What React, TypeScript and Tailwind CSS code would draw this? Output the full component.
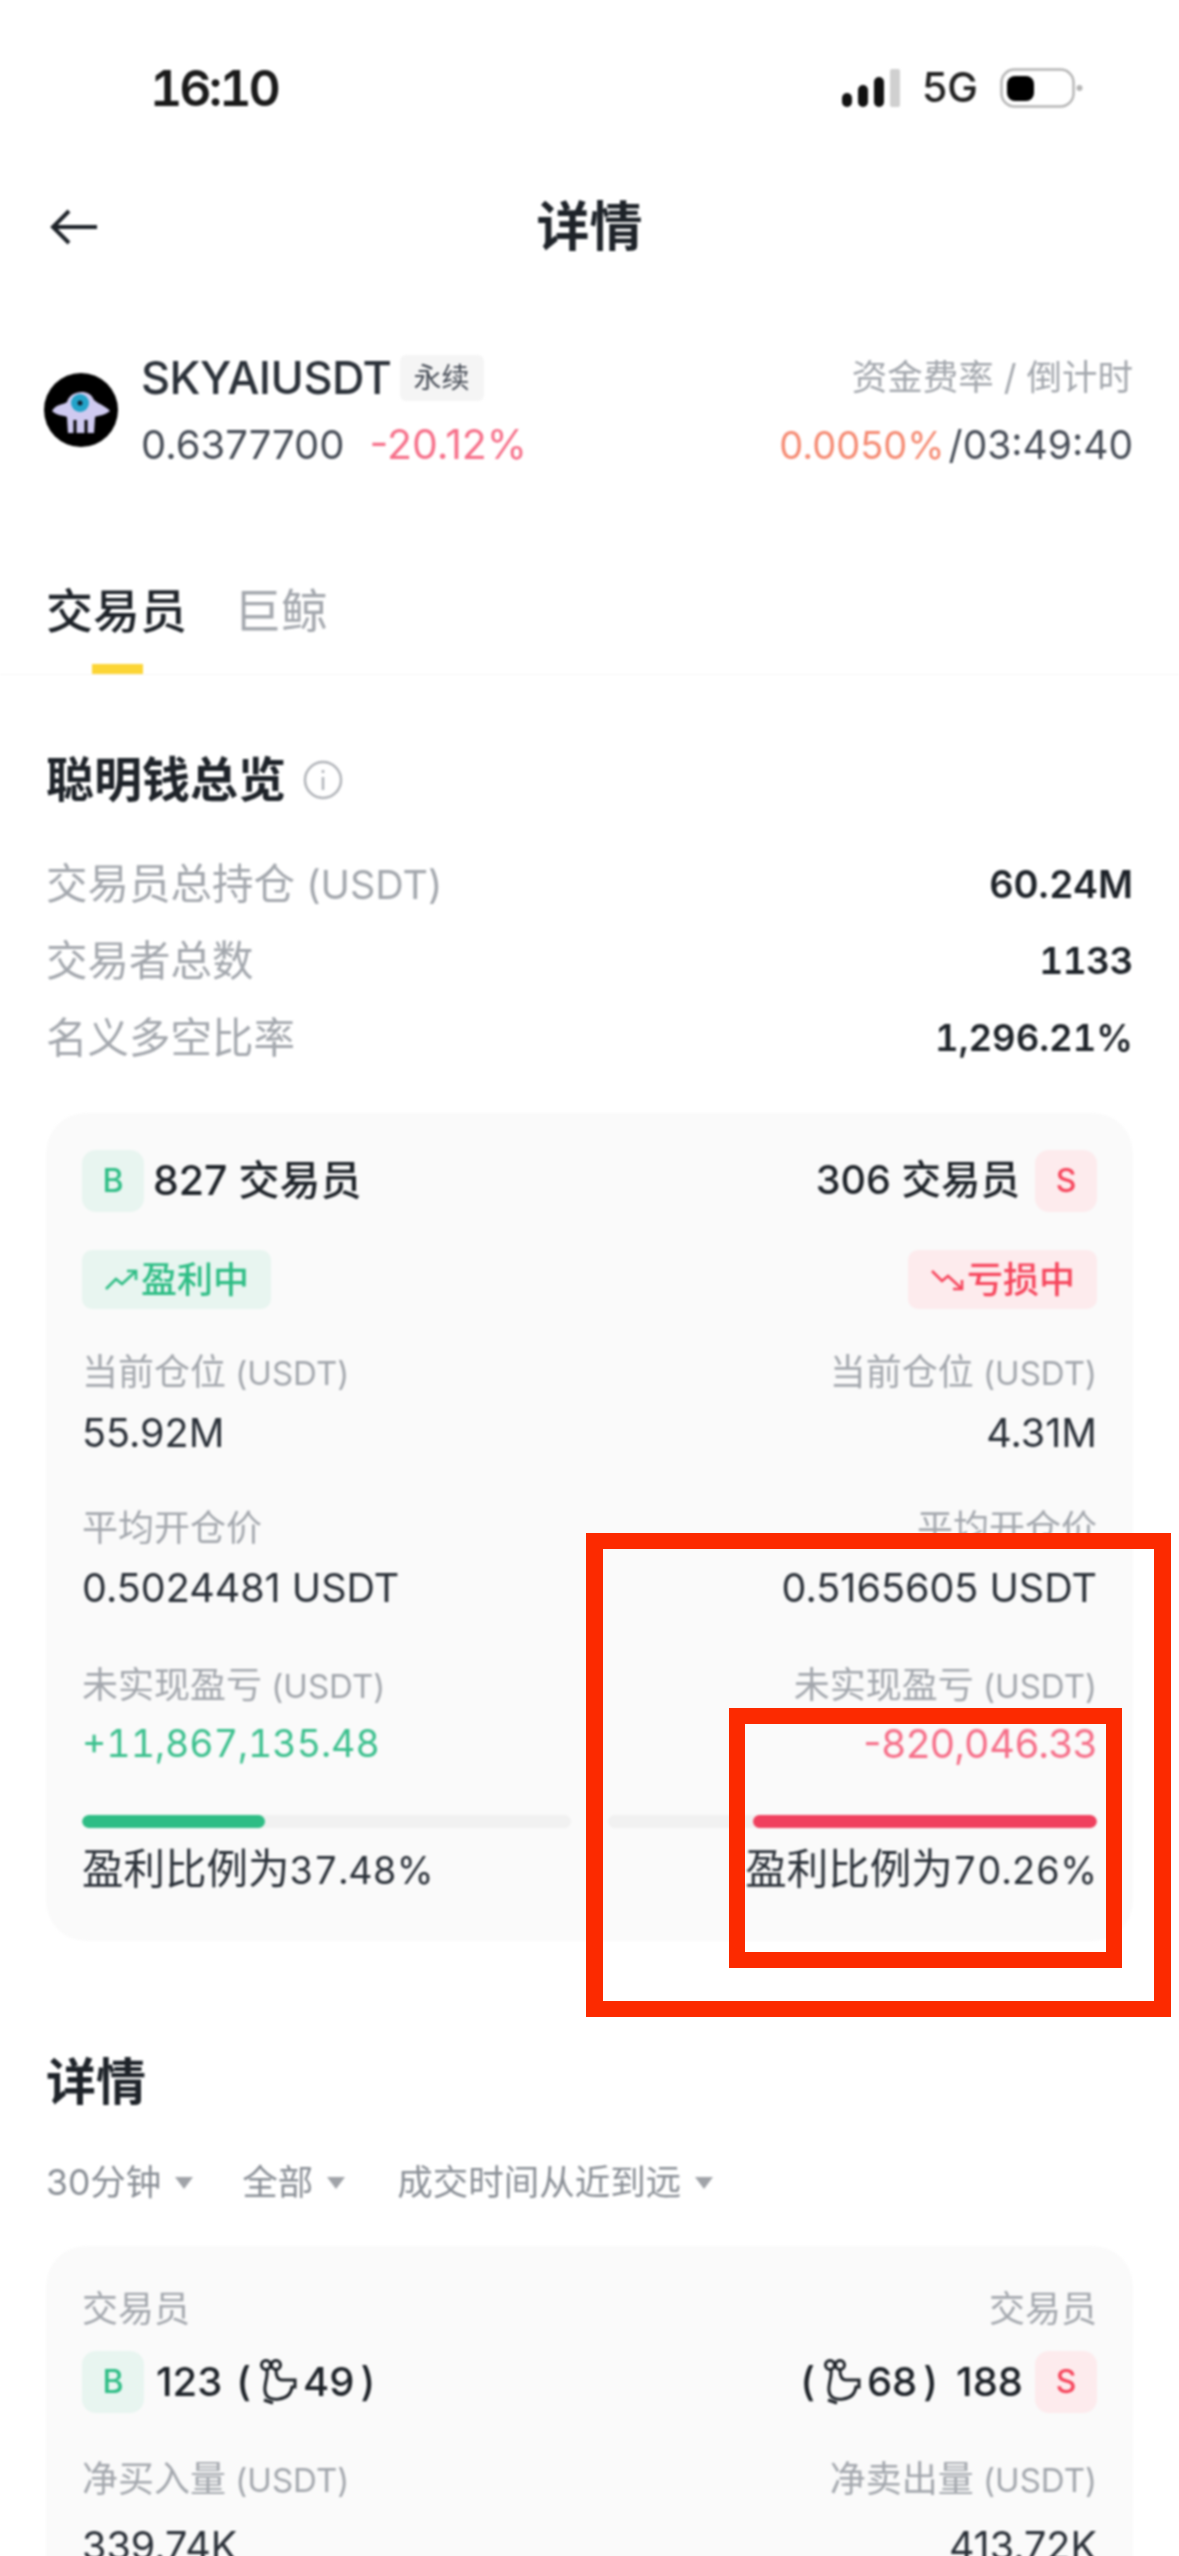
import React from "react";

const font = { fontFamily: '"Inter", "Noto Sans CJK SC", sans-serif' };

function Badge({ s }: { s: "B" | "S" }) {
  return (
    <span
      className={
        s === "B"
          ? "flex h-[62px] w-[62px] shrink-0 items-center justify-center rounded-[14px] bg-[#e8f5f0] text-[32px] font-medium text-[#2ebd85]"
          : "flex h-[62px] w-[62px] shrink-0 items-center justify-center rounded-[14px] bg-[#fdebed] text-[32px] font-medium text-[#f6465d]"
      }
    >
      {s}
    </span>
  );
}

function Trend({ up }: { up: boolean }) {
  return (
    <svg width="36" height="24" viewBox="0 0 36 24" fill="none" stroke="currentColor" strokeWidth="2.6">
      {up ? (
        <>
          <path d="M2 21 L12 11 L18 16 L31 4" />
          <path d="M23 3 H32 V12" />
        </>
      ) : (
        <>
          <path d="M2 3 L12 13 L18 8 L31 20" />
          <path d="M23 21 H32 V12" />
        </>
      )}
    </svg>
  );
}

function Smart() {
  return (
    <svg width="38" height="46" viewBox="0 0 38 46" fill="none" stroke="#1e2329" strokeWidth="3" className="shrink-0">
      <circle cx="7" cy="6" r="4.5" />
      <circle cx="17" cy="6" r="4.5" />
      <path d="M8 11 C9 19 5 25 6 32 C7 39 13 41 20 40 C28 39 32 35 33 28 L36 28 V21 L23 21 C19 21 17 17 17 11" />
      <path d="M5 41 L14 44" />
    </svg>
  );
}

function Label({ children, unit, right }: { children: React.ReactNode; unit?: boolean; right?: boolean }) {
  return (
    <div className={right ? "h-[44px] text-right text-[36px] leading-[44px] text-[#a3a7ad]" : "h-[44px] text-[36px] leading-[44px] text-[#a3a7ad]"}>
      {children}
      {unit && <span className="text-[33px]"> (USDT)</span>}
    </div>
  );
}

function Value({ children, cls }: { children: React.ReactNode; cls: string }) {
  return <div className={"h-[50px] text-[39.5px] leading-[50px] " + cls}>{children}</div>;
}

function Side(p: {
  right?: boolean;
  pos: string;
  price: string;
  pnl: string;
  pct: string;
  count: string;
}) {
  const r = !!p.right;
  const align = r ? "text-right" : "";
  return (
    <div className="flex flex-col">
      <div className={r ? "flex h-[62px] items-center justify-end gap-[15px]" : "flex h-[62px] items-center gap-[9px]"}>
        {!r && <Badge s="B" />}
        <span className={r ? "text-[39.5px] font-medium text-[#1e2329]" : "text-[41px] font-medium text-[#1e2329]"}>{p.count} 交易员</span>
        {r && <Badge s="S" />}
      </div>
      <div className={r ? "mt-[38px] flex justify-end" : "mt-[38px] flex"}>
        <span
          className={
            r
              ? "flex h-[59px] w-[189px] items-center justify-center gap-[1px] rounded-[10px] bg-[#fdebed] text-[36px] font-medium text-[#f6465d]"
              : "flex h-[59px] w-[189px] items-center justify-center gap-[1px] rounded-[10px] bg-[#e8f5f0] text-[36px] font-medium text-[#2ebd85]"
          }
        >
          <Trend up={!r} />
          {r ? "亏损中" : "盈利中"}
        </span>
      </div>
      <div className="mt-[41px]">
        <Label right={r} unit>当前仓位</Label>
      </div>
      <div className="mt-[14px]">
        <Value cls={align + " text-[#2b3139]"}>{p.pos}</Value>
      </div>
      <div className="mt-[48px]">
        <Label right={r}>平均开仓价</Label>
      </div>
      <div className="mt-[13px]">
        <Value cls={align + " text-[#2b3139]"}>{p.price}</Value>
      </div>
      <div className="mt-[50px]">
        <Label right={r} unit>未实现盈亏</Label>
      </div>
      <div className="mt-[12px]">
        {r ? (
          <Value cls="text-right text-[#f6708a]">{p.pnl}</Value>
        ) : (
          <div className="h-[50px] text-[37.5px] leading-[50px] tabular-nums text-[#3cc08e]">{p.pnl}</div>
        )}
      </div>
      <div className={r ? "mt-[46px] flex h-[13px] justify-end overflow-hidden rounded-full bg-[#f1f1f1]" : "mt-[46px] flex h-[13px] overflow-hidden rounded-full bg-[#f1f1f1]"}>
        <div className={r ? "h-full w-[70.26%] rounded-full bg-[#f0405e]" : "h-full w-[37.48%] rounded-full bg-[#2ebd85]"} />
      </div>
      <div className="mt-[16px]">
        <div className={"h-[50px] text-[41.5px] leading-[50px] text-[#2b3139] " + align}>
          盈利比例为<span className="text-[37.5px] tabular-nums">{p.pct}</span>
        </div>
      </div>
    </div>
  );
}

function Caret() {
  return <span className="ml-[14px] h-0 w-0 border-x-[9px] border-t-[12px] border-x-transparent border-t-[#a0a3a8]" />;
}

export default function App() {
  return (
    <div style={font} className="relative h-[2556px] w-[1179px] overflow-hidden bg-white">
      <div className="blur-[1px]">
        {/* status bar */}
        <div className="flex h-[176px] items-center justify-between pl-[150px] pr-[96px]">
          <span className="text-[50px] font-semibold tabular-nums tracking-[-3px] text-[#1a1a1a]">16:10</span>
          <div className="flex items-center">
            <svg width="58" height="38" viewBox="0 0 58 38">
              <rect x="0" y="24" width="10" height="14" rx="5" fill="#111" />
              <rect x="16" y="16" width="10" height="22" rx="5" fill="#111" />
              <rect x="32" y="8" width="10" height="30" rx="5" fill="#111" />
              <rect x="48" y="0" width="10" height="38" rx="2" fill="#d0d0d0" />
            </svg>
            <span className="ml-[22px] text-[41px] font-medium text-[#222]">5G</span>
            <svg className="ml-[22px]" width="83" height="40" viewBox="0 0 83 40" fill="none">
              <rect x="1.5" y="1.5" width="72" height="37" rx="13" stroke="#b5b5b5" strokeWidth="2.5" />
              <rect x="7" y="8" width="27" height="25" rx="8" fill="#000" />
              <circle cx="79.5" cy="20" r="3" fill="#b5b5b5" />
            </svg>
          </div>
        </div>

        {/* nav */}
        <div className="relative flex h-[102px] items-center justify-center pt-[2px]">
          <svg className="absolute left-[50px] top-[33px]" width="48" height="36" viewBox="0 0 48 36" fill="none" stroke="#1e2329" strokeWidth="4">
            <path d="M47 18 H3" />
            <path d="M19 2 L3 18 L19 34" />
          </svg>
          <span className="text-[53px] font-bold text-[#1e2329]">详情</span>
        </div>

        {/* coin */}
        <div className="mt-[68px] flex items-center justify-between pl-[44px] pr-[46px]">
          <div className="flex items-center gap-[23px]">
            <svg className="-translate-y-[2px]" width="74" height="74" viewBox="0 0 74 74">
              <circle cx="37" cy="37" r="37" fill="#000" />
              <path d="M8 38 C12 31 19 32 23 29 C26 17 46 15 50 27 C56 32 62 33 66 38 C60 43 55 42 51 44 L50 60 L24 60 L23 44 C19 42 13 43 8 38 Z" fill="#cfcaf0" />
              <circle cx="36" cy="30" r="9" fill="#23a3c9" />
              <circle cx="36" cy="30" r="2.5" fill="#123" />
              <path d="M31 47 V60 M42 47 V60" stroke="#000" strokeWidth="3" />
            </svg>
            <div className="flex flex-col gap-[3px]">
              <div className="flex h-[64px] items-center">
                <span className="text-[45px] font-medium tracking-[-0.5px] text-[#2b3139]">SKYAIUSDT</span>
                <span className="ml-[8px] flex h-[46px] w-[84px] items-center justify-center rounded-[6px] bg-[#f5f5f5] text-[28px] text-[#474d57]">永续</span>
              </div>
              <div className="flex h-[64px] items-center gap-[25px]">
                <span className="text-[40px] text-[#474d57]">0.6377700</span>
                <span className="text-[41px] text-[#f6708a]">-20.12%</span>
              </div>
            </div>
          </div>
          <div className="flex flex-col items-end gap-[3px]">
            <div className="flex h-[64px] items-center text-[35.5px] text-[#a3a7ad]">资金费率 / 倒计时</div>
            <div className="flex h-[64px] items-center text-[39px]">
              <span className="text-[38px] text-[#f58a72]">0.0050%</span>
              <span className="ml-[4px] text-[#474d57]">/03:49:40</span>
            </div>
          </div>
        </div>

        {/* tabs */}
        <div className="mt-[102px] border-b border-[#f7f7f7] px-[46px]">
          <div className="flex h-[64px] items-center gap-[47px] text-[47px]">
            <span className="font-medium text-[#1e2329]">交易员</span>
            <span className="text-[#a3a7ad]">巨鲸</span>
          </div>
          <div className="ml-[46px] mt-[21px] h-[10px] w-[51px] bg-[#fcd535]" />
        </div>

        <div className="px-[46px]">
          <div className="mt-[73px] flex h-[64px] items-center gap-[17px]">
            <span className="text-[48px] font-bold text-[#1e2329]">聪明钱总览</span>
            <svg width="40" height="40" viewBox="0 0 40 40" fill="none" stroke="#b0b3b8" strokeWidth="2.5">
              <circle cx="20" cy="20" r="18" />
              <path d="M20 17 V30 M20 10 V13" />
            </svg>
          </div>

          <div className="mt-[42px] flex flex-col gap-[17px] text-[41.5px]">
            <div className="flex h-[60px] items-center justify-between">
              <span className="text-[#a3a7ad]">交易员总持仓<span className="text-[39.5px]"> (USDT)</span></span>
              <span className="text-[38px] font-semibold text-[#1e2329]">60.24M</span>
            </div>
            <div className="flex h-[60px] items-center justify-between">
              <span className="text-[#a3a7ad]">交易者总数</span>
              <span className="text-[37px] font-semibold tabular-nums tracking-[-0.5px] text-[#1e2329]">1133</span>
            </div>
            <div className="flex h-[60px] items-center justify-between">
              <span className="text-[#a3a7ad]">名义多空比率</span>
              <span className="text-[36.5px] font-semibold tabular-nums text-[#1e2329]">1,296.21%</span>
            </div>
          </div>

          {/* summary card */}
          <div className="mt-[45px] grid grid-cols-2 gap-x-[37px] rounded-[40px] bg-[#fafafa] px-[36px] pb-[47px] pt-[37px]">
            <Side count="827" pos="55.92M" price="0.5024481 USDT" pnl="+11,867,135.48" pct="37.48%" />
            <Side right count="306" pos="4.31M" price="0.5165605 USDT" pnl="-820,046.33" pct="70.26%" />
          </div>

          <div className="mt-[106px] flex h-[70px] items-center text-[50px] font-bold text-[#1e2329]">详情</div>

          <div className="mt-[41px] flex h-[50px] items-center text-[35.5px] text-[#8a8f96]">
            <span>30分钟</span>
            <Caret />
            <span className="ml-[49px]">全部</span>
            <Caret />
            <span className="ml-[52px]">成交时间从近到远</span>
            <Caret />
          </div>

          {/* detail card */}
          <div className="mt-[38px] rounded-t-[40px] bg-[#fafafa] px-[36px] pt-[41px]">
            <div className="flex justify-between">
              <Label>交易员</Label>
              <Label right>交易员</Label>
            </div>
            <div className="mt-[20px] flex items-center justify-between">
              <div className="flex items-center text-[40px] font-medium text-[#1e2329]">
                <Badge s="B" />
                <span className="ml-[12px]">123</span>
                <span className="ml-[14px]">(</span>
                <span className="ml-[8px]"><Smart /></span>
                <span className="ml-[6px]">49</span>
                <span className="ml-[6px]">)</span>
              </div>
              <div className="flex items-center text-[40px] font-medium text-[#1e2329]">
                <span>(</span>
                <span className="ml-[8px]"><Smart /></span>
                <span className="ml-[6px]">68</span>
                <span className="ml-[6px]">)</span>
                <span className="ml-[18px]">188</span>
                <span className="ml-[12px]"><Badge s="S" /></span>
              </div>
            </div>
            <div className="mt-[44px] flex justify-between">
              <Label unit>净买入量</Label>
              <Label right unit>净卖出量</Label>
            </div>
            <div className="mt-[20px] flex justify-between">
              <Value cls="text-[#2b3139]">339.74K</Value>
              <Value cls="text-[#2b3139]">413.72K</Value>
            </div>
          </div>
        </div>
      </div>

      {/* red annotation boxes drawn over the screenshot */}
      <div className="absolute left-[586px] top-[1533px] h-[484px] w-[585px] border-x-[17px] border-y-[16px] border-[#fc2a00]" />
      <div className="absolute left-[729px] top-[1708px] h-[260px] w-[393px] border-x-[16px] border-y-[16px] border-[#fc2a00]" />
    </div>
  );
}
